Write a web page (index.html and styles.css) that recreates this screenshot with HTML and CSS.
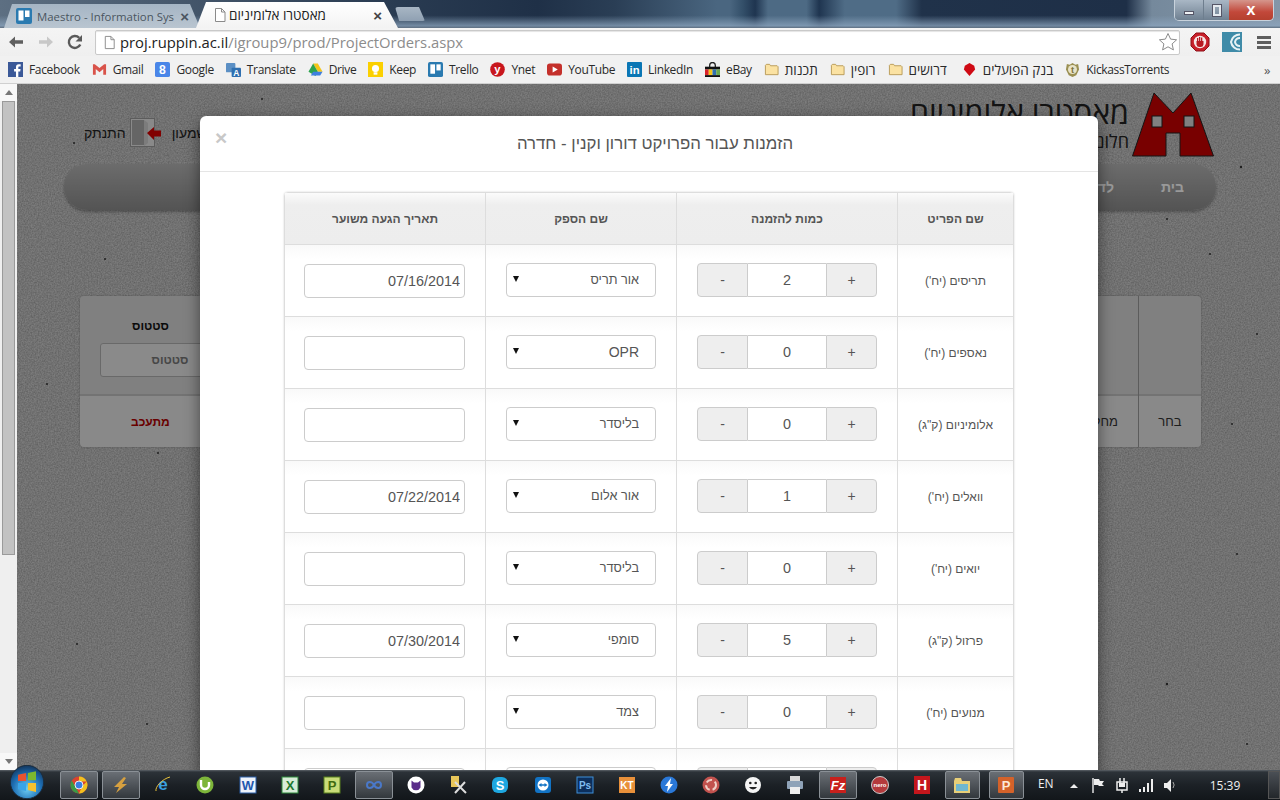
FILE: index.html
```html
<!DOCTYPE html>
<html lang="he">
<head>
<meta charset="utf-8">
<title>מאסטרו אלומיניום</title>
<link rel="stylesheet" href="styles.css">
</head>
<body>
<div class="window">
  <header class="titlebar">
    <div class="tab tab-bg">
      <svg class="ic" viewBox="0 0 16 16"><rect width="16" height="16" rx="2" fill="#2a7ab0"/><rect x="2.500" y="2.500" width="5" height="10" fill="#fff"/><rect x="9" y="2.500" width="4.500" height="6.500" fill="#fff"/></svg>
      <span class="tab-title tab-title-fade">Maestro - Information Sys</span><span class="tab-x">×</span>
    </div>
    <div class="tab tab-active">
      <svg class="ic" viewBox="0 0 16 16"><path d="M3.500 1.500h6l3.500 3.500v9.500h-9.500z" fill="#fff" stroke="#8a8a8a"/><path d="M9.500 1.500v3.500h3.500" fill="none" stroke="#8a8a8a"/></svg>
      <span class="tab-title" dir="rtl">מאסטרו אלומיניום</span><span class="tab-x tab-x-dark">×</span>
    </div>
    <div class="tab-new"></div>
    <div class="win-btns">
      <div class="win-btn win-min"><i></i></div>
      <div class="win-btn win-max"><i></i></div>
      <div class="win-btn win-close">x</div>
    </div>
  </header>

  <div class="toolbar">
    <svg class="nav-ic" viewBox="0 0 16 16"><path d="M15 6.300H7V2.500L1 8l6 5.500V9.700h8z" fill="#5f5f5f"/></svg>
    <svg class="nav-ic nav-fwd" viewBox="0 0 16 16"><path d="M1 6.300h8V2.500L15 8l-6 5.500V9.700H1z" fill="#c8c8c8"/></svg>
    <svg class="nav-ic nav-reload" viewBox="0 0 16 16"><path d="M13.300 10.500A6 6 0 1 1 12.200 3.800" fill="none" stroke="#5a5a5a" stroke-width="2.400"/><path d="M15 1v6.500H8.500z" fill="#5a5a5a"/></svg>
    <div class="omnibox">
      <svg class="url-ic" viewBox="0 0 16 16"><path d="M3.500 1.500h6l3.500 3.500v9.500h-9.500z" fill="#fff" stroke="#8a8a8a"/><path d="M9.500 1.500v3.500h3.500" fill="none" stroke="#8a8a8a"/></svg>
      <span class="url"><b class="url-host">proj.ruppin.ac.il</b>/igroup9/prod/ProjectOrders.aspx</span>
      <svg class="star" viewBox="0 0 20 20"><path d="M10 1.500l2.600 5.600 6 .7-4.500 4.100 1.300 6-5.400-3.100-5.400 3.100 1.300-6L1.400 7.800l6-.7z" fill="#fff" stroke="#8b8b8b"/></svg>
    </div>
    <svg class="ext" viewBox="0 0 20 20"><path d="M6 1h8l5 5v8l-5 5H6l-5-5V6z" fill="#c8202a" stroke="#8e1018"/><circle cx="10" cy="10" r="6.200" fill="#f5e6e6"/><path d="M6.500 9h7v3.500a3 3 0 0 1-3 2.500h-1a3 3 0 0 1-3-2.500zM7 9V6h1.300v3zM9 9V5h1.300v4zM11 9V5.500h1.300V9z" fill="#b81a22"/></svg>
    <svg class="ext ext-teal" viewBox="0 0 20 20"><rect width="20" height="20" fill="#3f8ba8"/><path d="M18 2.500a9 9 0 0 0-9 7.500 9 9 0 0 0 9 7.500M18 6a5 5 0 0 0-5 4 5 5 0 0 0 5 4" fill="none" stroke="#e8f2f5" stroke-width="2"/></svg>
    <div class="menu"><i></i><i></i><i></i></div>
  </div>

  <nav class="bookmarks">
    <a class="bm"><svg class="ic" viewBox="0 0 16 16"><rect width="16" height="16" fill="#3b5998"/><path d="M11 16v-6h2l.4-2.500H11V6c0-.8.300-1.200 1.200-1.200h1.300V2.500h-2c-2 0-3 1.200-3 3.200v1.800h-2V10h2v6z" fill="#fff"/></svg>Facebook</a>
    <a class="bm"><svg class="ic" viewBox="0 0 16 16"><path d="M1 2.500v11h3V7.500l4 3.500 4-3.500v6h3v-11h-2L8 6.500 3 2.500z" fill="#d9534a"/></svg>Gmail</a>
    <a class="bm"><svg class="ic" viewBox="0 0 16 16"><rect width="16" height="16" rx="2" fill="#4a86e8"/><text x="8" y="13" class="ic-t" font-size="13" fill="#fff">8</text></svg>Google</a>
    <a class="bm"><svg class="ic" viewBox="0 0 16 16"><rect y="1" width="10" height="10" rx="1" fill="#5b8fc4"/><rect x="6" y="6" width="10" height="10" rx="1" fill="#2f6fb0"/><text x="11" y="15" class="ic-t" font-size="9" fill="#fff">A</text></svg>Translate</a>
    <a class="bm"><svg class="ic" viewBox="0 0 16 16"><path d="M5.500 1.500h5l5 9h-5z" fill="#f5c518"/><path d="M5.500 1.500l5 9-2.500 4.500L.5 10.500z" fill="#2da44e"/><path d="M3 14.500l2.500-4h10l-2.500 4z" fill="#3f7fe0"/></svg>Drive</a>
    <a class="bm"><svg class="ic" viewBox="0 0 16 16"><rect width="16" height="16" fill="#fbd000"/><circle cx="8" cy="7" r="3.800" fill="#fff"/><rect x="6" y="11" width="4" height="2.500" fill="#fff"/></svg>Keep</a>
    <a class="bm"><svg class="ic" viewBox="0 0 16 16"><rect width="16" height="16" rx="2" fill="#2a7ab0"/><rect x="2.500" y="2.500" width="5" height="10" fill="#fff"/><rect x="9" y="2.500" width="4.500" height="6.500" fill="#fff"/></svg>Trello</a>
    <a class="bm"><svg class="ic" viewBox="0 0 16 16"><circle cx="8" cy="8" r="7.800" fill="#c8161d"/><text x="8" y="12" class="ic-t" font-size="12" fill="#fff">y</text></svg>Ynet</a>
    <a class="bm"><svg class="ic" viewBox="0 0 16 16"><rect y="1.500" width="16" height="13" rx="3" fill="#c4302b"/><path d="M6 4.800v6.400L11.500 8z" fill="#fff"/></svg>YouTube</a>
    <a class="bm"><svg class="ic" viewBox="0 0 16 16"><rect width="16" height="16" rx="1" fill="#0a76b4"/><text x="8" y="13" class="ic-t" font-size="12" fill="#fff">in</text></svg>LinkedIn</a>
    <a class="bm"><svg class="ic" viewBox="0 0 16 16"><path d="M5 6V3.500a3 3 0 0 1 6 0V6" fill="none" stroke="#222" stroke-width="1.400"/><rect y="5" width="16" height="3" fill="#111"/><rect y="8" width="4" height="6" fill="#d8232a"/><rect x="4" y="8" width="4" height="6" fill="#f5c518"/><rect x="8" y="8" width="4" height="6" fill="#2f6fb0"/><rect x="12" y="8" width="4" height="6" fill="#6aa84f"/><rect y="14" width="16" height="2" fill="#111"/></svg>eBay</a>
    <a class="bm bm-he" dir="rtl"><span>תכנות</span><svg class="ic" viewBox="0 0 16 16"><path class="folder" d="M1.500 13.500v-10l1-1h3.500l1 1.500h7l1 1v8.500z"/></svg></a>
    <a class="bm bm-he" dir="rtl"><span>רופין</span><svg class="ic" viewBox="0 0 16 16"><path class="folder" d="M1.500 13.500v-10l1-1h3.500l1 1.500h7l1 1v8.500z"/></svg></a>
    <a class="bm bm-he" dir="rtl"><span>דרושים</span><svg class="ic" viewBox="0 0 16 16"><path class="folder" d="M1.500 13.500v-10l1-1h3.500l1 1.500h7l1 1v8.500z"/></svg></a>
    <a class="bm bm-he bm-bank" dir="rtl"><span>בנק הפועלים</span><svg class="ic" viewBox="0 0 16 16"><path d="M8 1l5 3 1 4-6 7-6-7 1-4z" fill="#cf0a14"/></svg></a>
    <a class="bm"><svg class="ic" viewBox="0 0 16 16"><path d="M2 2l3 1 3-2 3 2 3-1 1 6-3 6-4 2-4-2-3-6z" fill="#9a8f52"/><circle cx="8" cy="8" r="4.800" fill="#e8e3c8"/><text x="8" y="11.500" class="ic-t" font-size="10" fill="#7b7240">t</text></svg>KickassTorrents</a>
    <span class="bm-more">»</span>
  </nav>

  <main class="viewport">
    <div class="scrollbar">
      <div class="sb-btn"><i class="sb-up"></i></div>
      <div class="sb-track"><div class="sb-thumb"></div></div>
      <div class="sb-btn"><i class="sb-down"></i></div>
    </div>
    <div class="page">
      <svg class="noise" width="1263" height="686"><filter id="grain"><feTurbulence type="fractalNoise" baseFrequency="0.7" numOctaves="2"/><feColorMatrix values="0 0 0 0 0  0 0 0 0 0  0 0 0 0 0  0 0 0 .36 -.09"/></filter><rect width="1263" height="686" filter="url(#grain)"/><g class="specks"><circle cx="57" cy="59" r="1"/><circle cx="88" cy="175" r="1"/><circle cx="141" cy="369" r="1"/><circle cx="1224" cy="83" r="1.200"/><circle cx="1193" cy="170" r="1"/><circle cx="1240" cy="250" r="1"/><circle cx="1215" cy="340" r="1"/><circle cx="245" cy="15" r="1"/><circle cx="1150" cy="135" r="1"/><circle cx="30" cy="300" r="1"/><circle cx="1220" cy="470" r="1"/><circle cx="60" cy="560" r="1"/><circle cx="130" cy="640" r="1"/><circle cx="1150" cy="600" r="1.200"/><circle cx="1230" cy="660" r="1"/></g></svg>
      <div class="page-head">
        <div class="user">
          <span class="logout">התנתק</span>
          <svg class="door" viewBox="0 0 32 30"><rect x=".5" y=".5" width="24" height="28" fill="#e4e4e4" stroke="#9a9a9a"/><path d="M2 2h12v25H2z" fill="#a8a8a8"/><path d="M14 2l4 3v20l-4 3z" fill="#cfcfcf"/><path d="M17 15l7-6v3.500h7v6h-7V22z" fill="#d80000"/></svg>
          <span class="hello">שמעון</span>
        </div>
        <div class="brand">
          <div class="brand-text">
            <div class="brand-name">מאסטרו אלומיניום</div>
            <div class="brand-sub">חלונות ודלתות</div>
          </div>
          <svg class="logo" viewBox="0 0 82 66"><path d="M.5 64 22 1 41 21 59 1 81.500 64H48V41H34V64z" fill="#c80000" stroke="#222"/><rect x="20" y="24" width="10" height="11" fill="#d5d5d5" stroke="#222"/><rect x="52" y="24" width="10" height="11" fill="#d5d5d5" stroke="#222"/></svg>
        </div>
      </div>
      <div class="site-nav" dir="rtl"><span class="site-link">בית</span><span class="site-link">לדוחות</span></div>
      <div class="panel">
        <div class="panel-col panel-status">
          <div class="panel-head"><b class="panel-label">סטטוס</b><span class="panel-input">סטטוס</span></div>
          <div class="panel-cell panel-late">מתעכב</div>
        </div>
        <div class="panel-col panel-grow">
          <div class="panel-head"></div>
          <div class="panel-cell">מחק</div>
        </div>
        <div class="panel-col panel-pick">
          <div class="panel-head"></div>
          <div class="panel-cell">בחר</div>
        </div>
      </div>
    </div>

    <div class="backdrop"></div>
    <section class="modal">
      <div class="modal-head">
        <span class="modal-close">×</span>
        <h4 class="modal-title" dir="rtl">הזמנות עבור הפרויקט דורון וקנין - חדרה</h4>
      </div>
      <div class="modal-body">
        <table class="orders" dir="rtl">
          <thead>
            <tr><th class="c-name">שם הפריט</th><th class="c-qty">כמות להזמנה</th><th class="c-sup">שם הספק</th><th class="c-date">תאריך הגעה משוער</th></tr>
          </thead>
          <tbody>
            <tr><td>תריסים (יח')</td><td><div class="qty"><button class="qty-btn">+</button><input class="qty-val" value="2"><button class="qty-btn">-</button></div></td><td><div class="sel"><select class="sel-box"><option>אור תריס</option></select></div></td><td><input class="date" dir="ltr" value="07/16/2014"></td></tr>
            <tr><td>נאספים (יח')</td><td><div class="qty"><button class="qty-btn">+</button><input class="qty-val" value="0"><button class="qty-btn">-</button></div></td><td><div class="sel"><select class="sel-box sel-latin"><option>OPR</option></select></div></td><td><input class="date" dir="ltr" value=""></td></tr>
            <tr><td>אלומיניום (ק"ג)</td><td><div class="qty"><button class="qty-btn">+</button><input class="qty-val" value="0"><button class="qty-btn">-</button></div></td><td><div class="sel"><select class="sel-box"><option>בליסדר</option></select></div></td><td><input class="date" dir="ltr" value=""></td></tr>
            <tr><td>וואלים (יח')</td><td><div class="qty"><button class="qty-btn">+</button><input class="qty-val" value="1"><button class="qty-btn">-</button></div></td><td><div class="sel"><select class="sel-box"><option>אור אלום</option></select></div></td><td><input class="date" dir="ltr" value="07/22/2014"></td></tr>
            <tr><td>יואים (יח')</td><td><div class="qty"><button class="qty-btn">+</button><input class="qty-val" value="0"><button class="qty-btn">-</button></div></td><td><div class="sel"><select class="sel-box"><option>בליסדר</option></select></div></td><td><input class="date" dir="ltr" value=""></td></tr>
            <tr><td>פרזול (ק"ג)</td><td><div class="qty"><button class="qty-btn">+</button><input class="qty-val" value="5"><button class="qty-btn">-</button></div></td><td><div class="sel"><select class="sel-box"><option>סומפי</option></select></div></td><td><input class="date" dir="ltr" value="07/30/2014"></td></tr>
            <tr><td>מנועים (יח')</td><td><div class="qty"><button class="qty-btn">+</button><input class="qty-val" value="0"><button class="qty-btn">-</button></div></td><td><div class="sel"><select class="sel-box"><option>צמד</option></select></div></td><td><input class="date" dir="ltr" value=""></td></tr>
            <tr><td></td><td><div class="qty"><button class="qty-btn"></button><input class="qty-val" value=""><button class="qty-btn"></button></div></td><td><div class="sel"><select class="sel-box"></select></div></td><td><input class="date" dir="ltr" value=""></td></tr>
          </tbody>
        </table>
      </div>
    </section>
  </main>

  <footer class="taskbar">
    <div class="orb"><svg viewBox="0 0 40 40" class="orb-ic"><defs><radialGradient id="orbg" cx=".5" cy=".7" r=".7"><stop offset="0" stop-color="#6fd0f5"/><stop offset=".6" stop-color="#1e6fb5"/><stop offset="1" stop-color="#12355c"/></radialGradient></defs><circle cx="20" cy="20" r="18.500" fill="url(#orbg)" stroke="#1a2a3a"/><path d="M10 12l9-2v9h-9z" fill="#e8532f"/><path d="M21 10l9-2v10h-9z" fill="#7cb82f"/><path d="M10 21h9v9l-9-2z" fill="#3aa4e8"/><path d="M21 21h9v10l-9-2z" fill="#f5c12e"/></svg></div>
    <div class="apps">
      <div class="app on"><svg class="tic" viewBox="0 0 18 18"><circle cx="9" cy="9" r="8.500" fill="#d9432f"/><path d="M9 .5a8.500 8.500 0 0 1 7.700 5H9z" fill="#f3c01e"/><path d="M16.700 5.500A8.500 8.500 0 0 1 9 17.500l3-7z" fill="#f3c01e"/><path d="M1.800 4.500 6 12l3 5.500A8.500 8.500 0 0 1 1.800 4.500z" fill="#3a9a44"/><circle cx="9" cy="9" r="4" fill="#3a7de0" stroke="#eee"/></svg></div>
      <div class="app on"><svg class="tic" viewBox="0 0 18 18"><path d="M12 1 2 11h5l-3 6 11-9h-5l4-6z" fill="#d6a040"/></svg></div>
      <div class="app"><svg class="tic" viewBox="0 0 18 18"><text x="9" y="14" class="ic-t" font-size="17" fill="#3aa0e0">e</text><path d="M2 15C1 11 8 3 16 1" fill="none" stroke="#e9c33c" stroke-width="1"/></svg></div>
      <div class="app"><svg class="tic" viewBox="0 0 18 18"><circle cx="9" cy="9" r="8.500" fill="#7db53a"/><path d="M5 4v5a4 4 0 0 0 8 0V6" fill="none" stroke="#fff" stroke-width="2.400"/></svg></div>
      <div class="app"><svg class="tic" viewBox="0 0 18 18"><rect x="1" y="1" width="16" height="16" fill="#eef3fa" stroke="#2b5ea8"/><text x="9" y="14" class="ic-t" font-size="13" fill="#1f58b0">W</text></svg></div>
      <div class="app"><svg class="tic" viewBox="0 0 18 18"><rect x="1" y="1" width="16" height="16" fill="#d8ecd8" stroke="#2e8a3c"/><text x="9" y="14" class="ic-t" font-size="13" fill="#1f7a30">X</text></svg></div>
      <div class="app"><svg class="tic" viewBox="0 0 18 18"><rect x="1" y="1" width="16" height="16" fill="#c9dc7a" stroke="#58801c"/><text x="9" y="14" class="ic-t" font-size="13" fill="#3f6a10">P</text></svg></div>
      <div class="app on"><svg class="tic" viewBox="0 0 18 18"><path d="M9 9C7 5 2 5 2 9s5 4 7 0c2-4 7-4 7 0s-5 4-7 0z" fill="none" stroke="#4a78c8" stroke-width="2"/></svg></div>
      <div class="app"><svg class="tic" viewBox="0 0 18 18"><circle cx="9" cy="9" r="8.500" fill="#fff"/><path d="M4.500 4.500 7 6.500h4l2.500-2v7a5 5 0 0 1-9 0z" fill="#5a2d8a"/></svg></div>
      <div class="app"><svg class="tic" viewBox="0 0 18 18"><rect x="2" y="0" width="8" height="11" fill="#e8c65a"/><path d="M6 6l11 11M16 6 6 17" stroke="#ddd" stroke-width="2"/></svg></div>
      <div class="app"><svg class="tic" viewBox="0 0 18 18"><rect x="1" y="1" width="16" height="16" rx="6" fill="#1ea7e0"/><text x="9" y="14" class="ic-t" font-size="13" fill="#fff">S</text></svg></div>
      <div class="app"><svg class="tic" viewBox="0 0 18 18"><rect x="1" y="1" width="16" height="16" rx="3" fill="#1273c4"/><circle cx="9" cy="9" r="5.500" fill="#fff"/><path d="M4.500 9l3-2v1.300h3V7l3 2-3 2V9.700h-3V11z" fill="#1273c4"/></svg></div>
      <div class="app"><svg class="tic" viewBox="0 0 18 18"><rect x="1" y="1" width="16" height="16" fill="#0c2f5c" stroke="#3f8fd8"/><text x="9" y="13" class="ic-t" font-size="10" fill="#7fbdf0">Ps</text></svg></div>
      <div class="app"><svg class="tic" viewBox="0 0 18 18"><rect x="1" y="1" width="16" height="16" fill="#e8903a"/><text x="9" y="13" class="ic-t" font-size="10" fill="#fff">KT</text></svg></div>
      <div class="app"><svg class="tic" viewBox="0 0 18 18"><circle cx="9" cy="9" r="8.500" fill="#2a78d8"/><path d="M11 2 5 10h3l-1 6 6-8h-3z" fill="#fff"/></svg></div>
      <div class="app"><svg class="tic" viewBox="0 0 18 18"><circle cx="9" cy="9" r="8.500" fill="#c2524e"/><circle cx="9" cy="9" r="5" fill="none" stroke="#f0d0c8" stroke-width="2" stroke-dasharray="6 3"/></svg></div>
      <div class="app"><svg class="tic" viewBox="0 0 18 18"><circle cx="9" cy="9" r="8" fill="#f5f5f5"/><circle cx="6.300" cy="7" r="1.300" fill="#222"/><circle cx="11.700" cy="7" r="1.300" fill="#222"/><path d="M5 11a4.500 4.500 0 0 0 8 0z" fill="#222"/></svg></div>
      <div class="app"><svg class="tic" viewBox="0 0 18 18"><rect x="4" y="0" width="10" height="6" fill="#d8d8d8"/><rect x="1" y="5" width="16" height="8" rx="1" fill="#8fa3b8"/><rect x="4" y="11" width="10" height="7" fill="#eee"/></svg></div>
      <div class="app on"><svg class="tic" viewBox="0 0 18 18"><rect x="1" y="1" width="16" height="16" fill="#c8201c"/><text x="9" y="14" class="ic-t ic-i" font-size="13" fill="#fff">Fz</text></svg></div>
      <div class="app"><svg class="tic" viewBox="0 0 18 18"><circle cx="9" cy="9" r="8.500" fill="#b43a3c" stroke="#ccc"/><text x="9" y="11" class="ic-t" font-size="6" fill="#fff">nero</text></svg></div>
      <div class="app"><svg class="tic" viewBox="0 0 18 18"><rect x="1" y="0" width="16" height="18" fill="#c4161c"/><text x="9" y="14" class="ic-t" font-size="14" fill="#fff">H</text></svg></div>
      <div class="app on app-narrow"><svg class="tic" viewBox="0 0 18 18"><path d="M1 5l1-3h6l1 3h8v12H1z" fill="#e8cf78"/><rect x="3" y="8" width="12" height="7" fill="#6fb7d0"/></svg></div>
      <div class="app on app-narrow app-last"><svg class="tic" viewBox="0 0 18 18"><rect x="1" y="1" width="16" height="16" rx="1" fill="#d4622a"/><text x="9" y="14" class="ic-t" font-size="13" fill="#fde8d8">P</text></svg></div>
    </div>
    <div class="tray">
      <span class="tray-lang">EN</span>
      <svg class="tray-ic" viewBox="0 0 16 16"><path d="M4 11l4-4 4 4z" fill="#eee"/></svg>
      <svg class="tray-ic" viewBox="0 0 16 16"><path d="M3 1v15" stroke="#eee" stroke-width="1.400"/><path d="M4 2h5l1 2h4l-2 3 2 2H9L8 8H4z" fill="#eee"/></svg>
      <svg class="tray-ic" viewBox="0 0 16 16"><rect x="3" y="5" width="10" height="8" fill="none" stroke="#eee" stroke-width="1.500"/><path d="M6 1v5M10 1v5M8 13v3" stroke="#eee" stroke-width="1.500"/><rect x="5" y="6" width="6" height="4" fill="#eee"/></svg>
      <svg class="tray-ic" viewBox="0 0 16 16"><path d="M1 12h2v3H1zM5 10h2v5H5zM9 6h2v9H9zM13 2h2v13h-2z" fill="#eee"/></svg>
      <svg class="tray-ic" viewBox="0 0 16 16"><path d="M2 6h3l4-4v13l-4-4H2z" fill="#eee"/><path d="M11 5a5 5 0 0 1 0 6" fill="none" stroke="#aaa"/></svg>
      <span class="clock">15:39</span>
      <div class="show-desktop"></div>
    </div>
  </footer>
</div>
</body>
</html>
```
FILE: styles.css
```css
* { box-sizing: border-box; }
html, body { margin: 0; padding: 0; height: 100%; overflow: hidden; }
body { font-family: "Liberation Sans", Arial, sans-serif; }
.window { width: 1280px; height: 800px; display: flex; flex-direction: column; overflow: hidden; }

/* title bar */
.titlebar {
  height: 28px; display: flex; align-items: flex-end; padding-left: 4px;
  background:
    linear-gradient(180deg, rgba(30,45,62,0) 0, rgba(30,45,62,0) 55%, rgba(140,165,190,.75) 92%, #5d6e80 100%),
    linear-gradient(90deg, #5d6f82 0, #2a3c52 30%, #1f3047 42%, #2a3e55 48%, #4a6680 56%, #4a6680 57%, #34506a 58%, #1f3550 59%, #4d6a84 60%, #4d6a84 63%, #1f3550 64%, #4f6c86 66%, #4f6c86 70%, #20324a 72%, #1e2f47 88%, #75899c 90%, #8496a8 100%);
}
.tab { height: 25px; display: flex; align-items: center; font: 12px "Open Sans", sans-serif; }
.tab .ic { width: 16px; height: 16px; flex: none; }
.tab-bg {
  width: 196px; height: 24px; padding: 0 11px 0 12px; margin-right: -4px; color: #3f4a55;
  background: linear-gradient(180deg, #a5b5c4, #b9c5d0);
  clip-path: polygon(0 100%, 8px 0, 186px 0, 100% 100%);
}
.tab-active {
  width: 202px; height: 26px; padding: 0 16px 0 16px; color: #222; background: linear-gradient(180deg, #fff, #f3f3f3);
  clip-path: polygon(0 100%, 10px 0, 188px 0, 100% 100%);
}
.tab-title { flex: 1; margin-left: 5px; white-space: nowrap; }
.tab-title-fade { color: #4a5560; font-size: 11.400px; }
.tab-active .tab-title { text-align: left; margin-left: 1px; font-size: 13.500px; }
.tab-x { font: bold 15px "Liberation Sans", sans-serif; color: #4a5560; margin-left: 2px; }
.tab-x-dark { color: #444; }
.tab-new {
  width: 30px; height: 14px; margin: 0 0 7px -3px; border-radius: 3px 3px 2px 2px;
  background: linear-gradient(180deg, #a8b6c4, #8fa0b2); clip-path: polygon(0 0, 80% 0, 100% 100%, 14% 100%);
}
.win-btns { margin-left: auto; margin-right: 6px; align-self: flex-start; display: flex; height: 21px; border: 1px solid #c8d2dc; border-top: 0; border-radius: 0 0 5px 5px; overflow: hidden; }
.win-btn { display: flex; align-items: center; justify-content: center; height: 100%; background: linear-gradient(180deg, #a9b7c5, #6f8091); }
.win-min { width: 28px; }
.win-min i { width: 10px; height: 4px; margin-top: 6px; background: #eef1f4; border: 1px solid #556; }
.win-max { width: 26px; border-left: 1px solid #6e7e8e; }
.win-max i { width: 8px; height: 11px; border: 2px solid #e4e9ee; outline: 1px solid #556; }
.win-close { width: 44px; color: #fff; font: bold 16px "Liberation Sans", sans-serif; background: linear-gradient(180deg, #d5968c, #c2483a 60%, #b5402f); }

/* toolbar */
.toolbar { height: 28px; display: flex; align-items: center; background: linear-gradient(180deg, #f4f4f4, #efefef); padding-left: 8px; }
.nav-ic { width: 16px; height: 16px; flex: none; }
.nav-fwd { margin-left: 14px; }
.nav-reload { margin-left: 13px; }
.omnibox { width: 1085px; height: 25px; margin-left: 12px; display: flex; align-items: center; padding-left: 6px; background: #fff; border: 1px solid #c9c9c9; border-radius: 2px; box-shadow: inset 0 1px 1px #e4e4e4; }
.url-ic { width: 15px; height: 15px; margin-right: 3px; }
.url { font: 14.800px "Open Sans", sans-serif; color: #8c8c8c; }
.url-host { font-weight: normal; color: #222; }
.star { width: 20px; height: 20px; margin-left: auto; margin-right: 1px; }
.ext { width: 20px; height: 20px; margin-left: 10px; }
.ext-teal { margin-left: 12px; }
.menu { margin-left: 15px; width: 14px; display: flex; flex-direction: column; gap: 2px; }
.menu i { display: block; height: 3px; background: #5e5e5e; }

/* bookmarks */
.bookmarks { height: 28px; display: flex; align-items: center; gap: 12px; padding: 0 10px 0 8px; background: #f1f1f1; border-bottom: 1px solid #d0d0d0; font: 12px "Open Sans", sans-serif; letter-spacing: -.35px; color: #2a2a2a; white-space: nowrap; }
.bm { display: flex; align-items: center; gap: 6px; }
.bm-he { font-size: 13.500px; letter-spacing: 0; }
.bm-bank { margin-left: 3px; }
.bm .ic { width: 15px; height: 15px; flex: none; }
.folder { fill: #fbe2a2; stroke: #b89a58; }
.ic-t { font-family: "Liberation Sans", sans-serif; font-weight: bold; text-anchor: middle; letter-spacing: 0; }
.ic-i { font-style: italic; }
.bm-more { margin-left: auto; color: #555; font-size: 13px; }

/* viewport */
.viewport { position: relative; flex: 1; display: flex; min-height: 0; overflow: hidden; }
.scrollbar { width: 17px; flex: none; display: flex; flex-direction: column; background: #efefef; }
.sb-btn { height: 17px; display: flex; align-items: center; justify-content: center; background: #f8f8f8; }
.sb-up { border: 4px solid transparent; border-top: 0; border-bottom: 5px solid #777; }
.sb-down { border: 4px solid transparent; border-bottom: 0; border-top: 5px solid #777; }
.sb-track { flex: 1; padding: 0 2px; }
.sb-thumb { height: 454px; background: #c2c2c2; border: 1px solid #9a9a9a; }

.page { position: relative; flex: 1; background: #cfcfcf; }
.noise { position: absolute; left: 0; top: 0; }
.specks { fill: #333; }
.page-head { position: relative; height: 80px; display: flex; justify-content: space-between; padding: 0 66px 0 67px; }
.user { display: flex; align-items: center; gap: 4px; height: 34px; margin-top: 32px; }
.logout { font-size: 14px; color: #222; }
.door { width: 32px; height: 30px; }
.hello { font-size: 14px; color: #222; margin-left: 6px; white-space: nowrap; }
.brand { display: flex; gap: 3px; padding-top: 8px; }
.brand-text { text-align: right; direction: rtl; padding-top: 2px; font-family: "Open Sans", sans-serif; }
.brand-name { font-size: 30.500px; line-height: 36px; color: #222; white-space: nowrap; }
.brand-sub { font-size: 18px; line-height: 22px; color: #222; white-space: nowrap; }
.logo { width: 82px; height: 66px; }
.site-nav { position: relative; height: 46px; margin: 0 64px 0 47px; padding: 0 32px; display: flex; align-items: center; gap: 47px; border-radius: 23px; background: linear-gradient(180deg, #b4b4b4, #8c8c8c); box-shadow: 0 2px 3px rgba(0,0,0,.3); }
.site-link { font-size: 14px; font-weight: bold; color: #fff; }
.panel { position: relative; display: flex; height: 151px; margin: 86px 79px 0 63px; border-radius: 4px; box-shadow: 0 0 2px rgba(0,0,0,.3); overflow: hidden; }
.panel-col { display: flex; flex-direction: column; }
.panel-status { width: 180px; }
.panel-grow { flex: 1; align-items: flex-end; }
.panel-pick { width: 63px; border-left: 1px solid #999; }
.panel-head { height: 100px; width: 100%; background: #d6d6d6; border-bottom: 2px solid #c0c0c0; padding: 23px 0 0 20px; display: flex; flex-direction: column; align-items: flex-start; gap: 10px; }
.panel-label { margin-left: 32px; font-size: 12px; color: #111; }
.panel-input { width: 140px; height: 34px; display: flex; align-items: center; justify-content: center; background: #e6e6e6; border: 1px solid #b0b0b0; border-radius: 3px; font-weight: bold; font-size: 12px; color: #777; }
.panel-cell { flex: 1; width: 100%; display: flex; align-items: center; justify-content: center; background: #e4e4e4; font-size: 13px; color: #333; }
.panel-late { justify-content: flex-start; padding-left: 51px; color: #b00000; font-weight: bold; font-size: 12px; }
.panel-grow .panel-cell { justify-content: flex-end; padding-right: 20px; }

.backdrop { position: absolute; inset: 0 0 0 17px; background: rgba(0,0,0,.4); }
.modal { position: absolute; left: 200px; top: 32px; width: 898px; height: 760px; background: #fff; border-radius: 6px; box-shadow: 0 5px 15px rgba(0,0,0,.5); }
.modal-head { height: 56px; display: flex; align-items: center; justify-content: center; position: relative; border-bottom: 1px solid #e5e5e5; }
.modal-title { margin: 0 0 0 12px; font-size: 16.800px; font-weight: normal; color: #555; white-space: nowrap; }
.modal-close { position: absolute; left: 15px; top: 10px; font: bold 21px/24px "Liberation Sans", sans-serif; color: #c8c8c8; }
.modal-body { padding: 20px 84px; }

/* orders table */
.orders { width: 730px; table-layout: fixed; border-collapse: separate; border-spacing: 0; border: 1px solid #ddd; border-radius: 4px; box-shadow: 0 0 2px rgba(0,0,0,.2); font-size: 12px; color: #555; }
.c-name { width: 116px; }
.c-qty { width: 221px; }
.c-sup { width: 191px; }
.c-date { width: 200px; }
.orders th { height: 52px; font-size: 12px; font-weight: bold; color: #555; background: linear-gradient(180deg, #fbfbfb 0, #eee 12px, #ededed 100%); border-bottom: 1px solid #ddd; border-left: 1px solid #ddd; }
.orders td { height: 72px; padding: 0 20px; text-align: center; background: linear-gradient(180deg, #f9f9f9 0, #fff 14px); border-bottom: 1px solid #ddd; border-left: 1px solid #ddd; }
.orders td:first-child { padding: 0 8px; }
.orders th:last-child, .orders td:last-child { border-left: 0; }

.qty { display: flex; height: 34px; margin-bottom: 2px; }
.qty-btn { flex: none; width: 51px; padding: 0; background: #eee; border: 1px solid #ccc; color: #555; font: 14px "Liberation Sans", sans-serif; }
.qty-btn:first-child { border-radius: 0 4px 4px 0; }
.qty-btn:last-child { border-radius: 4px 0 0 4px; }
.qty-val { width: 78px; min-width: 0; height: 34px; padding: 0; border: solid #ccc; border-width: 1px 0; background: #fff; text-align: center; color: #555; font: 14.400px "Liberation Sans", sans-serif; }

.sel { position: relative; width: 150px; margin: 0 auto 2px; }
.sel::after { content: ""; position: absolute; left: 7px; top: 13px; border: 3px solid transparent; border-bottom: 0; border-top: 6px solid #111; }
.sel-box { display: block; width: 100%; height: 34px; padding: 0 16px 0 12px; appearance: none; -webkit-appearance: none; background: #fff; border: 1px solid #ccc; border-radius: 4px; color: #555; font: 12.700px "Liberation Sans", sans-serif; }
.sel-latin { font-size: 14px; }

.date { display: block; width: 161px; height: 34px; padding: 0 4px; background: #fff; border: 1px solid #ccc; border-radius: 4px; color: #555; text-align: right; font: 14.400px "Liberation Sans", sans-serif; }

/* taskbar */
.taskbar { height: 30px; flex: none; display: flex; align-items: center; background: linear-gradient(180deg, #5c6268 0, #2c3238 2px, #1c2126 50%, #12161a 100%); position: relative; }
.orb { width: 58px; height: 30px; flex: none; display: flex; padding-left: 9px; overflow: visible; }
.orb-ic { width: 36px; height: 36px; margin-top: -6px; flex: none; }
.apps { display: flex; height: 30px; }
.app { width: 42.150px; height: 30px; display: flex; align-items: center; justify-content: center; }
.app.on { position: relative; }
.app.on::before { content: ""; position: absolute; inset: 1px 2px 1px 2px; border: 1px solid #8a9096; border-radius: 2px; background: linear-gradient(180deg, #6a6f75, #33383d); }
.app-narrow { width: 39px; }
.app-last { margin-left: 5px; }
.tic { width: 18px; height: 18px; position: relative; }
.tray { flex: 1; display: flex; align-items: center; height: 30px; color: #f0f0f0; font: 12px "Open Sans", sans-serif; }
.tray-lang { margin-left: 12px; margin-top: -4px; }
.tray-ic { width: 16px; height: 16px; margin-left: 8px; }
.tray-lang + .tray-ic { margin-left: 12px; }
.clock { margin-left: 32px; }
.show-desktop { width: 12px; height: 28px; margin-left: auto; margin-right: 0; border: 1px solid #555; background: linear-gradient(180deg, #4a4f55, #23272b); }
```
